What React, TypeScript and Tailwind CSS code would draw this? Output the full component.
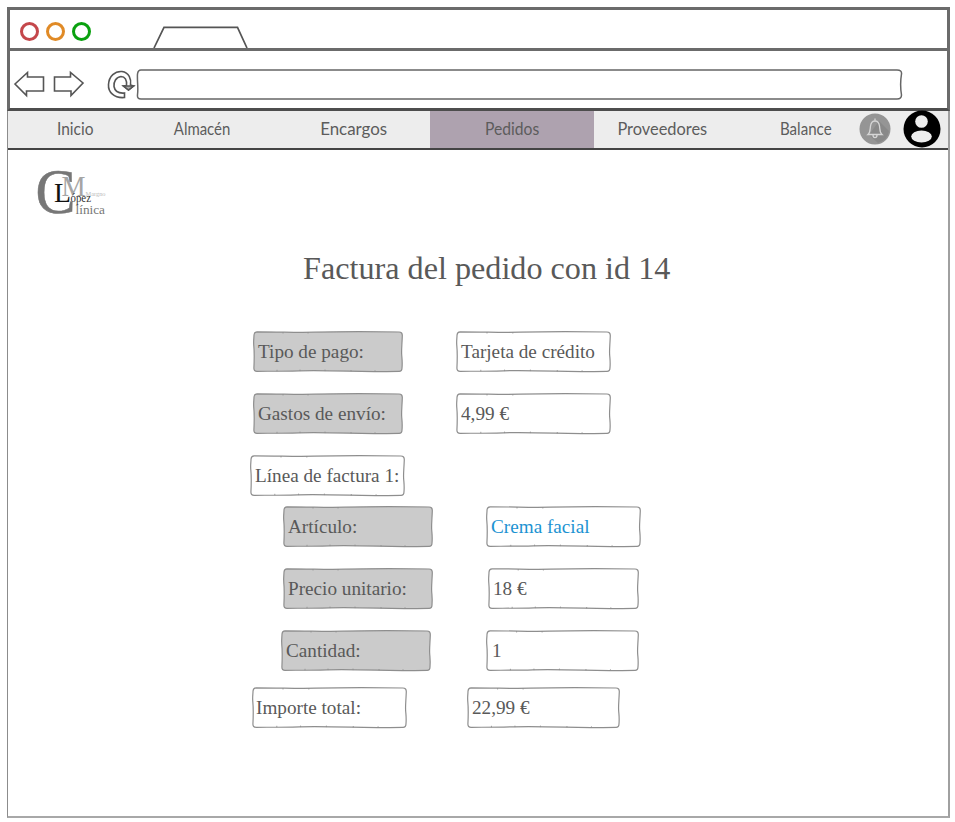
type BoxProps = {
  text: string;
  box: string;
  tone?: "label" | "plain" | "link";
};

function SketchBox({ text, box, tone = "plain" }: BoxProps) {
  return (
    <div className={`relative flex h-[41px] shrink-0 items-center ${box}`}>
      <svg
        className="absolute inset-0 h-full w-full overflow-visible"
        viewBox="0 0 150 41"
        preserveAspectRatio="none"
      >
        <path
          d="M4 .8 C30 .8 42 1.800 62 1.200 S105 .2 146 1 Q149.500 1 149.300 5 C149 14 148.300 19 148.700 24 S149.500 31 149 37 Q149 40.400 146 40.300 C124 40.700 110 40.600 96 40.200 S62 39.300 46 39.800 S20 40.200 4 40.300 Q.8 40.300 .9 37 C1.300 28 1.300 20 .8 15 S1 7 1 4 Q1.200 .9 4 .8Z"
          fill={tone === "label" ? "#cbcbcb" : "#ffffff"}
          stroke="#8e8e8e"
          strokeWidth="1.200"
          vectorEffect="non-scaling-stroke"
        />
        <path
          d="M24 38.800v1.500M47 38.600v1.500M72 38.600v1.500M98 39v1.500M122 39.300v1.200M30 1v1.500M55 1v1.500"
          stroke="#8e8e8e"
          strokeWidth=".8"
        />
      </svg>
      <span
        className={`relative whitespace-pre font-['Liberation_Serif',serif] text-[19.2px] leading-none ${
          tone === "link" ? "text-[#1c93d2]" : "text-[#595959]"
        }`}
      >
        {text}
      </span>
    </div>
  );
}

function Logo() {
  return (
    <svg
      className="ml-[28px] mt-[17px] block h-[54px] w-[76px] overflow-visible font-['Liberation_Serif',serif]"
      viewBox="35 167 76 54"
    >
      <text x="34.500" y="212.500" fontSize="63" textLength="40" lengthAdjust="spacingAndGlyphs" fill="#777" stroke="#777" strokeWidth=".5">C</text>
      <text x="60.500" y="196" fontSize="29" textLength="24" lengthAdjust="spacingAndGlyphs" fill="#a5a5a5">M</text>
      <text x="53" y="201.500" fontSize="28" textLength="17" lengthAdjust="spacingAndGlyphs" fill="#111">L</text>
      <text x="69.500" y="202" fontSize="12" textLength="20.500" lengthAdjust="spacingAndGlyphs" fill="#333">ópez</text>
      <text x="84.500" y="195.500" fontSize="6" textLength="20" lengthAdjust="spacingAndGlyphs" fill="#bbb">Margno</text>
      <text x="74.500" y="213.500" fontSize="13" textLength="29.500" lengthAdjust="spacingAndGlyphs" fill="#777">línica</text>
    </svg>
  );
}

function NavItem({ text, cell, squeeze }: { text: string; cell: string; squeeze: string }) {
  return (
    <a className={`flex h-full shrink-0 items-center justify-center pb-[4px] ${cell}`}>
      <span className={`inline-block text-[18px] leading-none text-[#5c5c5c] ${squeeze}`}>{text}</span>
    </a>
  );
}

export default function App() {
  return (
    <div className="h-[822px] w-[955px] overflow-hidden bg-white pl-[7px] pt-[7px]">
      <div className="flex h-[811px] w-[943px] flex-col border-b-2 border-l border-r-2 border-b-[#a8a8a8] border-l-[#8c8c8c] border-r-[#a0a0a0]">
        <div className="-ml-px -mr-0.5 flex h-[44px] shrink-0 items-end border-[3px] border-[#6b6b6b] bg-white">
          <div className="mb-[7px] ml-[10px] flex gap-[7px]">
            <i className="size-[19px] rounded-full border-[3px] border-[#c4474b]" />
            <i className="size-[19px] rounded-full border-[3px] border-[#e08a26]" />
            <i className="size-[19px] rounded-full border-[3px] border-[#0aa10f]" />
          </div>
          <svg className="ml-[62px] block h-[23px] w-[95px]" viewBox="0 0 95 23" fill="none" stroke="#555" strokeWidth="1.700">
            <path d="M1 23 L11 2.300 H84.500 L94 23" />
          </svg>
        </div>
        <div className="-ml-px -mr-0.5 flex h-[60px] shrink-0 items-center border-x-[3px] border-b-[3px] border-b-[#4d4d4d] border-x-[#6b6b6b] bg-white">
          <svg className="mt-[9px] block h-[34px] w-[126px] shrink-0" viewBox="10 67 126 34" fill="none" stroke="#555" strokeWidth="1.600">
            <path d="M15 84 L27.500 72.500 V77 H43.500 V91 H26.500 V95.500Z" />
            <path d="M54.500 77 H70.500 V72.500 L83 83 L71 95.500 V91 H54.500Z" />
            <path d="M124.500 97.500 C114 98.500 108 92 108.500 84.500 C109 76 115 71 122 71.500 C129 72.500 131.500 79 130.500 85 L133.500 86 L128.500 90 L123.500 86 L126.500 85.500 C127 80 125 76.500 121 76.500 C116 77 113.500 82 114 86.500 C115 92 119 93.500 124.500 93Z" />
            <path d="M123.500 86 H133.500 L128.500 90Z" fill="#aaa" />
          </svg>
          <svg className="mt-[10px] block h-[31px] w-[767px] shrink-0" viewBox="0 0 767 31" fill="none" stroke="#666" strokeWidth="1.500">
            <path d="M5 1 H761 Q766 1 765.500 5 C764 14 764.500 20 765.500 26 Q765.500 30 761 30 H5 Q1 30 1.500 26 C2.500 18 1 12 1.500 5 Q2 1 5 1Z" />
          </svg>
        </div>
        <nav className="flex h-[39px] shrink-0 items-center border-b-2 border-[#444] bg-[#ededed] font-['Lato',sans-serif]">
          <NavItem text="Inicio" cell="w-[134px]" squeeze="scale-x-[0.86]" />
          <NavItem text="Almacén" cell="w-[120px]" squeeze="scale-x-[0.83]" />
          <NavItem text="Encargos" cell="w-[168px] pl-[15px]" squeeze="scale-x-[0.94]" />
          <NavItem text="Pedidos" cell="w-[164px] bg-[#aea2af]" squeeze="scale-x-[0.87]" />
          <NavItem text="Proveedores" cell="w-[136px]" squeeze="scale-x-[0.91]" />
          <NavItem text="Balance" cell="ml-[22px] w-[107px]" squeeze="scale-x-[0.84]" />
          <svg className="mb-[2px] block size-[32px] shrink-0" viewBox="0 0 32 32" fill="none" stroke="#d6d6d6" strokeWidth="1.300">
            <circle cx="16" cy="16" r="15.500" fill="#959595" stroke="none" />
            <path d="M20 8 L30 18 A15 15 0 0 1 19 30 L10 22Z" fill="#898989" stroke="none" />
            <path d="M16 5.500 V8 M9 21.500 C11.500 19.500 11 16 11.500 13 C12 9.500 13.500 8 16 8 C18.500 8 20 9.500 20.500 13 C21 16 20.500 19.500 23 21.500Z" />
            <path d="M14 22 C14 25.500 18 25.500 18 22" />
          </svg>
          <svg className="mb-px ml-[12px] block size-[38px] shrink-0" viewBox="0 0 38 38">
            <circle cx="19" cy="19" r="18.500" fill="#000" />
            <circle cx="18.500" cy="11.500" r="6.300" fill="#ededed" />
            <ellipse cx="18.500" cy="26.500" rx="10.300" ry="6" fill="#ededed" />
          </svg>
        </nav>
        <main>
          <Logo />
          <h1 className="mt-[28px] pl-[295px] font-['Liberation_Serif',serif] text-[32.2px] leading-[38px] text-[#595959]">
            Factura del pedido con id 14
          </h1>
          <div className="mt-[44px] flex flex-col">
            <div className="ml-[245px] flex gap-[53px]">
              <SketchBox text="Tipo de pago:" box="w-[150px] pl-[5px]" tone="label" />
              <SketchBox text="Tarjeta de crédito" box="w-[155px] pl-[5px]" />
            </div>
            <div className="ml-[245px] mt-[21px] flex gap-[53px]">
              <SketchBox text="Gastos de envío:" box="w-[150px] pl-[5px]" tone="label" />
              <SketchBox text="4,99 €" box="w-[155px] pl-[5px]" />
            </div>
            <div className="ml-[242px] mt-[21px] flex">
              <SketchBox text="Línea de factura 1:" box="w-[155px] pl-[5px]" />
            </div>
            <div className="ml-[275px] mt-[10px] flex gap-[53px]">
              <SketchBox text="Artículo:" box="w-[150px] pl-[5px]" tone="label" />
              <SketchBox text="Crema facial" box="w-[155px] pl-[5px]" tone="link" />
            </div>
            <div className="ml-[275px] mt-[21px] flex gap-[55px]">
              <SketchBox text="Precio unitario:" box="w-[150px] pl-[5px]" tone="label" />
              <SketchBox text="18 €" box="w-[151px] pl-[5px]" />
            </div>
            <div className="ml-[273px] mt-[21px] flex gap-[55px]">
              <SketchBox text="Cantidad:" box="w-[150px] pl-[5px]" tone="label" />
              <SketchBox text="1" box="w-[153px] pl-[6px]" />
            </div>
            <div className="ml-[244px] mt-[16px] flex gap-[60px]">
              <SketchBox text="Importe total:" box="w-[155px] pl-1" />
              <SketchBox text="22,99 €" box="w-[153px] pl-[5px]" />
            </div>
          </div>
        </main>
      </div>
    </div>
  );
}
